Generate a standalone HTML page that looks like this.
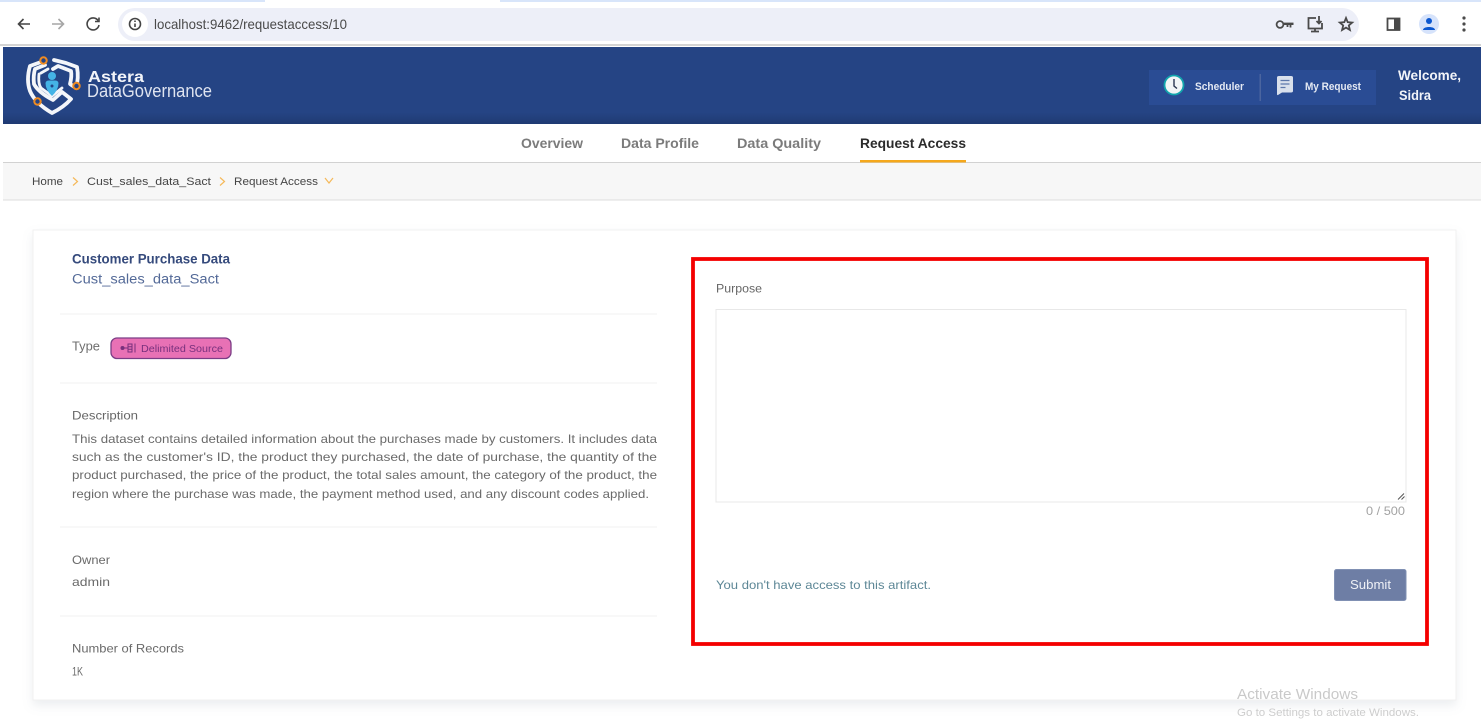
<!DOCTYPE html>
<html><head><meta charset="utf-8"><title>Request Access</title>
<style>
html,body{margin:0;padding:0;background:#fff;width:1481px;height:727px;overflow:hidden}
svg{display:block;position:absolute;left:0;top:0;filter:blur(.35px)}
text{font-family:"Liberation Sans",sans-serif;white-space:pre}
</style></head><body>
<svg width="1481" height="727" viewBox="0 0 1481 727" xmlns="http://www.w3.org/2000/svg">
<defs>
<filter id="sh" x="-5%" y="-5%" width="110%" height="112%"><feDropShadow dx="0" dy="5" stdDeviation="5" flood-color="#8a93a5" flood-opacity=".16"/></filter>
<linearGradient id="hd" x1="0" y1="0" x2="0" y2="1"><stop offset="0" stop-color="#254484"/><stop offset=".85" stop-color="#254484"/><stop offset="1" stop-color="#1f3a72"/></linearGradient>
</defs>

<!-- browser chrome -->
<rect width="1481" height="3" fill="#fff"/>
<rect x="0" y="0" width="265" height="2" fill="#d8e5fa"/>
<rect x="500" y="0" width="981" height="2" fill="#d8e5fa"/>
<rect x="118" y="8" width="1241" height="33" rx="16.5" fill="#edeff8"/>
<circle cx="135" cy="24" r="13" fill="#fff"/>
<g fill="none" stroke="#444" stroke-width="1.600">
<path d="M30 24H18.500M23.500 19L18.500 24L23.500 29"/>
<path d="M52 24H63.500M58.500 19L63.500 24L58.500 29" stroke="#a6a6a6"/>
<path d="M98 20.500A6 6 0 1 0 99 25M99 17.500V21.500H95"/>
<circle cx="135" cy="24" r="5.500"/>
<path d="M135 23.500V27M135 20.500V22"/>
</g>
<text x="154" y="29" font-size="14" fill="#4a4a4a" textLength="193" lengthAdjust="spacingAndGlyphs">localhost:9462/requestaccess/10</text>
<g fill="none" stroke="#4a4a4a" stroke-width="1.800">
<circle cx="1280" cy="24.500" r="3.400"/>
<path d="M1284 23.800H1293.500" stroke-width="2.400"/>
<path d="M1290.500 24.500V27.500M1287.500 24.500V27"/>
<path d="M1316 18H1308.500V28.500H1322V23"/>
<path d="M1311 31.500H1319M1315 28.500V31.500M1319 16V23.500M1316.500 21L1319 23.500L1321.500 21"/>
<path d="M1346 18L1347.700 22.200L1352.200 22.600L1348.800 25.500L1349.900 30L1346 27.600L1342.100 30L1343.200 25.500L1339.800 22.600L1344.300 22.200Z"/>
<rect x="1387.500" y="18.500" width="12" height="11.500"/>
</g>
<rect x="1394" y="18" width="6" height="12.500" fill="#4a4a4a"/>
<circle cx="1429" cy="24" r="10" fill="#d6e3fb"/>
<circle cx="1429" cy="21" r="3" fill="#0b57d0"/>
<path d="M1423 30C1423 26 1435 26 1435 30Z" fill="#0b57d0"/>
<g fill="#4a4a4a"><circle cx="1464" cy="18" r="1.600"/><circle cx="1464" cy="24" r="1.600"/><circle cx="1464" cy="30" r="1.600"/></g>
<rect x="0" y="44" width="1481" height="2" fill="#d4d4d4"/>

<!-- header -->
<rect x="3" y="47" width="1478" height="77" fill="url(#hd)"/>
<g fill="none" stroke="#f4f6fa" stroke-linejoin="round" stroke-linecap="round">
<path d="M41 62L30 66Q26 80 30 91Q35 103 52 113Q64 107 71 99L62 92L53 100Q38 92 34 84Q33 76 35 69L45 65" stroke-width="3.800"/>
<path d="M54 60L66 63L77 67Q79 78 76 88L70 84Q72 76 71 71L58 66L53 69" stroke-width="3.800"/>
<path d="M41 73L48 69M39 74Q38 84 41 88L52 96L62 88" stroke-width="2.800"/>
</g>
<g fill="#45b4e6">
<circle cx="52" cy="76" r="4"/>
<path d="M45.500 83Q46 80.500 49 80.500H55Q58 80.500 58.500 83Q58.500 90 52 96Q45.500 90 45.500 83Z"/>
</g>
<circle cx="52" cy="86" r="1.500" fill="#254484"/>
<g fill="#254484" stroke="#ee8a22" stroke-width="2"><circle cx="43.500" cy="60.500" r="3.200"/><circle cx="76.500" cy="86" r="3.200"/><circle cx="37.500" cy="101.500" r="3.200"/></g>
<text x="88" y="82" font-size="16" font-weight="bold" fill="#f2f4f9" textLength="56" lengthAdjust="spacingAndGlyphs">Astera</text>
<text x="87" y="97" font-size="18" fill="#dfe4f0" textLength="125" lengthAdjust="spacingAndGlyphs">DataGovernance</text>

<rect x="1149" y="70" width="227" height="35" fill="#2a4c94"/>
<rect x="1259.500" y="74" width="1.500" height="27" fill="#4b659f"/>
<circle cx="1174" cy="85" r="9.500" fill="#f2f4f6" stroke="#12a5ad" stroke-width="1.800"/>
<path d="M1174 79V86L1177 88.500" fill="none" stroke="#2b3550" stroke-width="1.400"/>
<path d="M1277 77.500Q1277 76 1279 76H1291Q1293 76 1293 77.500V91Q1293 92.500 1291 92.500H1282L1278 95Q1277 95.500 1277 94Z" fill="#d9e0ec"/>
<path d="M1280.500 80.500H1289.500M1280.500 84H1289.500M1280.500 87.500H1285.500" stroke="#5d78ab" stroke-width="1.300"/>
<text x="1195" y="90" font-size="11" font-weight="bold" fill="#e4e9f3" textLength="49" lengthAdjust="spacingAndGlyphs">Scheduler</text>
<text x="1305" y="90" font-size="11" font-weight="bold" fill="#e4e9f3" textLength="56" lengthAdjust="spacingAndGlyphs">My Request</text>
<text x="1398" y="80" font-size="13.500" font-weight="bold" fill="#f2f4f9" textLength="63" lengthAdjust="spacingAndGlyphs">Welcome,</text>
<text x="1399" y="100" font-size="13.500" font-weight="bold" fill="#f2f4f9" textLength="32" lengthAdjust="spacingAndGlyphs">Sidra</text>

<!-- tabs -->
<g font-size="14" font-weight="bold" fill="#7b7b7b">
<text x="521" y="148" textLength="62" lengthAdjust="spacingAndGlyphs">Overview</text>
<text x="621" y="148" textLength="78" lengthAdjust="spacingAndGlyphs">Data Profile</text>
<text x="737" y="148" textLength="84" lengthAdjust="spacingAndGlyphs">Data Quality</text>
<text x="860" y="148" textLength="106" lengthAdjust="spacingAndGlyphs" fill="#2b2b2b">Request Access</text>
</g>

<!-- breadcrumb -->
<rect x="3" y="162" width="1478" height="38" fill="#f7f7f7"/>
<rect x="3" y="162" width="1478" height="1" fill="#d2d2d2"/>
<rect x="3" y="199.500" width="1478" height="1" fill="#dcdcdc"/>
<rect x="860" y="160" width="106" height="2.500" fill="#f5a81c"/>
<g font-size="11" fill="#454545">
<text x="32" y="185" textLength="31" lengthAdjust="spacingAndGlyphs">Home</text>
<text x="87" y="185" textLength="124" lengthAdjust="spacingAndGlyphs">Cust_sales_data_Sact</text>
<text x="234" y="185" textLength="84" lengthAdjust="spacingAndGlyphs">Request Access</text>
</g>
<path d="M73 177.500L77.500 181.500L73 185.500M220 177.500L224.500 181.500L220 185.500M325 178L329 183L333 178" fill="none" stroke="#f5b95a" stroke-width="1.200"/>

<!-- card -->
<rect x="33" y="230" width="1423" height="470" fill="#fff" stroke="#f1f1f1" filter="url(#sh)"/>
<text x="72" y="263.500" font-size="13.500" font-weight="bold" fill="#354a7c" textLength="158" lengthAdjust="spacingAndGlyphs">Customer Purchase Data</text>
<text x="72" y="283.500" font-size="13.500" fill="#546a98" textLength="147" lengthAdjust="spacingAndGlyphs">Cust_sales_data_Sact</text>
<g fill="#f0f0f0">
<rect x="60" y="313.500" width="597" height="1"/>
<rect x="60" y="382.500" width="597" height="1"/>
<rect x="60" y="526.500" width="597" height="1"/>
<rect x="60" y="615.500" width="597" height="1"/>
</g>
<text x="72" y="350.500" font-size="12.500" fill="#6f6f6f" textLength="28" lengthAdjust="spacingAndGlyphs">Type</text>
<rect x="111" y="338" width="120" height="20.500" rx="6" fill="#e871b5" stroke="#7b3d86" stroke-width="1.300"/>
<circle cx="122.500" cy="348" r="2" fill="#78307d"/>
<path d="M124 348H128M128 344H132V352H128ZM128 346.700H132M128 349.300H132M135 343.500V352.500" fill="none" stroke="#78307d" stroke-width="1"/>
<text x="141" y="352" font-size="10.500" fill="#78307d" textLength="82" lengthAdjust="spacingAndGlyphs">Delimited Source</text>

<g font-size="12" fill="#6a6a6a">
<text x="72" y="419.500" fill="#666" textLength="66" lengthAdjust="spacingAndGlyphs">Description</text>
<text x="72" y="443" textLength="585" lengthAdjust="spacingAndGlyphs">This dataset contains detailed information about the purchases made by customers. It includes data</text>
<text x="72" y="461" textLength="585" lengthAdjust="spacingAndGlyphs">such as the customer's ID, the product they purchased, the date of purchase, the quantity of the</text>
<text x="72" y="479" textLength="585" lengthAdjust="spacingAndGlyphs">product purchased, the price of the product, the total sales amount, the category of the product, the</text>
<text x="72" y="498" textLength="577" lengthAdjust="spacingAndGlyphs">region where the purchase was made, the payment method used, and any discount codes applied.</text>
<text x="72" y="564" textLength="38" lengthAdjust="spacingAndGlyphs">Owner</text>
<text x="72" y="586" textLength="38" lengthAdjust="spacingAndGlyphs">admin</text>
<text x="72" y="652.500" textLength="112" lengthAdjust="spacingAndGlyphs">Number of Records</text>
<text x="72" y="675.500" textLength="11" lengthAdjust="spacingAndGlyphs">1K</text>
</g>

<!-- form -->
<text x="716" y="292.500" font-size="12" fill="#666" textLength="46" lengthAdjust="spacingAndGlyphs">Purpose</text>
<rect x="716" y="309.500" width="690" height="192.500" fill="#fff" stroke="#e8e8e8"/>
<path d="M1398 499.500L1404 493.500M1401.500 499.500L1404.500 496.500" stroke="#555" stroke-width="1"/>
<text x="1366" y="515" font-size="12" fill="#a3a3a3" textLength="39" lengthAdjust="spacingAndGlyphs">0 / 500</text>
<text x="716" y="589" font-size="12" fill="#5d8796" textLength="215" lengthAdjust="spacingAndGlyphs">You don't have access to this artifact.</text>
<rect x="1334.500" y="569.500" width="71.500" height="31" rx="2" fill="#6e7ea5" stroke="#8090b3"/>
<text x="1350" y="589" font-size="12.500" fill="#eef0f6" textLength="41" lengthAdjust="spacingAndGlyphs">Submit</text>

<!-- red highlight -->
<rect x="693" y="259" width="734" height="385" fill="none" stroke="#f40000" stroke-width="3.800"/>

<!-- watermark -->
<text x="1237" y="699" font-size="15" fill="#c9c9c9" textLength="121" lengthAdjust="spacingAndGlyphs">Activate Windows</text>
<text x="1237" y="716" font-size="11" fill="#cdcdcd" textLength="182" lengthAdjust="spacingAndGlyphs">Go to Settings to activate Windows.</text>
</svg>
</body></html>
